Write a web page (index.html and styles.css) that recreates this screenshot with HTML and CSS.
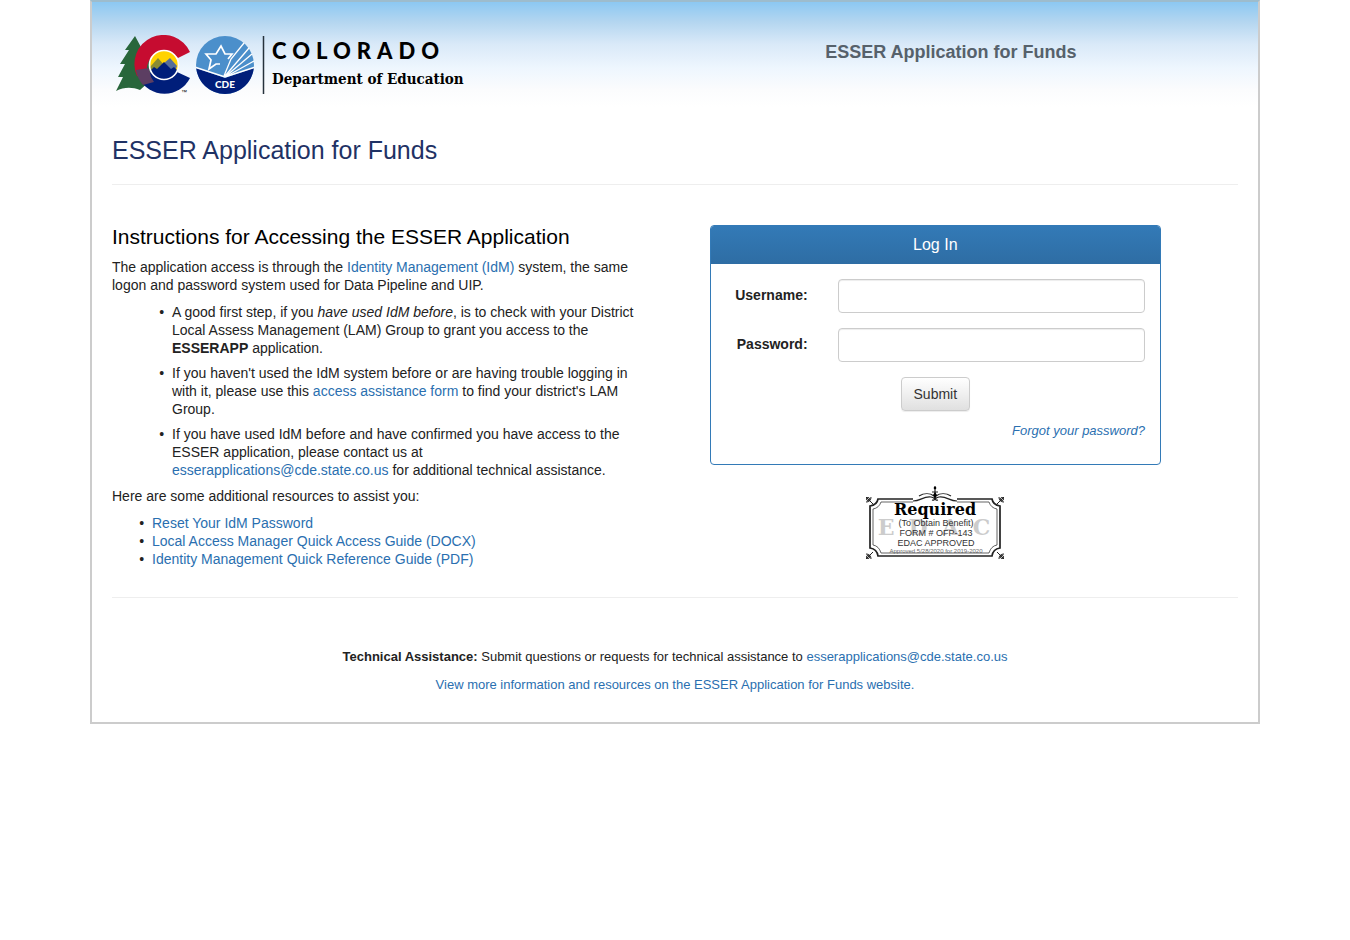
FILE: index.html
```html
<!DOCTYPE html>
<html lang="en">
<head>
<meta charset="utf-8">
<title>ESSER Application for Funds</title>
<link rel="stylesheet" href="styles.css">
</head>
<body>
<div class="page">
  <header class="site-header">
    <svg class="logo" viewBox="0 0 360 60" role="img" aria-label="Colorado Department of Education">
      <path fill="#28663b" d="M23 1 13 15h4L8 29h5L6 42h5L4 56c8-4 16-4 24-1l11-10V20l-8 1-4-7h3z"/>
      <path fill="#c60c30" d="M78 17A28.500 28.500 0 0 0 25 41L39 46A17 17 0 0 1 66 23z"/>
      <path fill="#001e7a" d="M27 43A28.500 28.500 0 0 0 78 43L65 37 40 37z"/>
      <path fill="#5c3e62" d="M24 35l13-2 2 9 3 5-11 3a29 29 0 0 1-7-15z"/>
      <circle cx="52" cy="30" r="14.500" fill="#ffd200"/>
      <path fill="#8a8b32" d="M38 32l8-9 7 8-8 9-6-3z"/>
      <path fill="#586f98" d="M51 29l7-6 7 8-4 9-9-6z"/>
      <path fill="#001e7a" d="M38 36l4-4 3 2 7-7 7 7 3-2 4 4a14.500 14.500 0 0 1-28 0z"/>
      <circle cx="52" cy="30" r="14.500" fill="none" stroke="#fff" stroke-width="1.700"/>
      <text class="logo-tm" x="69" y="59">™</text>
      <circle cx="113" cy="30" r="29" fill="#4b8fcb"/>
      <path fill="#001e7a" d="M84.160 33 113 43 141.840 33A29 29 0 0 1 84.160 33z"/>
      <path fill="none" stroke="#fff" stroke-width="1.500" d="M84 32.500 113 42 142 32.500"/>
      <path fill="none" stroke="#fff" stroke-width="1.300" d="M112 41 119 24 132 8M113 41 137 13M114 41 140 19M115 41 142 26"/>
      <path fill="none" stroke="#fff" stroke-width="1.700" d="M108 29 104 29 97 34 99 25 94 19H104L109 11 113 19H120L116 24"/>
      <text class="logo-badge" x="113" y="53">CDE</text>
      <path stroke="#26323c" stroke-width="1.500" d="M151.500 1v58"/>
      <text class="logo-name" x="160" y="24">COLORADO</text>
      <text class="logo-dept" x="160" y="49">Department of Education</text>
    </svg>
    <div class="site-title">ESSER Application for Funds</div>
  </header>

  <h1 class="page-title">ESSER Application for Funds</h1>

  <main class="content">
    <section class="instructions">
      <h2>Instructions for Accessing the ESSER Application</h2>
      <p>The application access is through the <a href="#">Identity Management (IdM)</a> system, the same logon and password system used for Data Pipeline and UIP.</p>
      <ul class="steps">
        <li>A good first step, if you <em>have used IdM before</em>, is to check with your District Local Assess Management (LAM) Group to grant you access to the <strong>ESSERAPP</strong> application.</li>
        <li>If you haven't used the IdM system before or are having trouble logging in with it, please use this <a href="#">access assistance form</a> to find your district's LAM Group.</li>
        <li>If you have used IdM before and have confirmed you have access to the ESSER application, please contact us at <a href="#">esserapplications@cde.state.co.us</a> for additional technical assistance.</li>
      </ul>
      <p>Here are some additional resources to assist you:</p>
      <ul class="resources">
        <li><a href="#">Reset Your IdM Password</a></li>
        <li><a href="#">Local Access Manager Quick Access Guide (DOCX)</a></li>
        <li><a href="#">Identity Management Quick Reference Guide (PDF)</a></li>
      </ul>
    </section>

    <section class="access">
      <form class="panel">
        <h2 class="panel-heading">Log In</h2>
        <div class="panel-body">
          <div class="field">
            <label for="username">Username:</label>
            <input id="username" type="text">
          </div>
          <div class="field">
            <label for="password">Password:</label>
            <input id="password" type="password">
          </div>
          <button class="submit" type="submit">Submit</button>
          <a class="forgot" href="#">Forgot your password?</a>
        </div>
      </form>
      <svg class="seal" viewBox="0 0 140 76" role="img" aria-label="Required to obtain benefit, EDAC approved">
        <text class="seal-mark" x="76" y="50">EDAC</text>
        <g fill="none" stroke="#222">
          <path stroke-width="1.700" d="M48 14H13q-1 6-8 7v42q7 1 8 8h114q1-7 8-8V21q-7-1-8-7H92"/>
          <path stroke-width=".7" d="M48 17H16q-2 6-8 7v36q6 1 8 8h108q2-7 8-8V24q-6-1-8-7H92"/>
          <path d="M1 74l7-7M139 74l-7-7M1 12l7 7M139 12l-7 7M1 17q5 0 5-5M139 17q-5 0-5-5M1 69q5 0 5 5M139 69q-5 0-5 5"/>
          <circle cx="3" cy="14" r="1.500"/><circle cx="137" cy="14" r="1.500"/><circle cx="3" cy="72" r="1.500"/><circle cx="137" cy="72" r="1.500"/>
          <path stroke-width="1.200" d="M48 16c8 0 10-5 18-4 5 1 4 4 1 3M92 16c-8 0-10-5-18-4-5 1-4 4-1 3M54 11c5-3 11-3 15 0M86 11c-5-3-11-3-15 0M70 1v14M67 7h6"/>
        </g>
        <circle cx="70" cy="3" r="1.300"/><path d="M68 10l2-3 2 3-2 4z"/>
        <text class="seal-title" x="70" y="30">Required</text>
        <text class="seal-line" x="71" y="41">(To Obtain Benefit)</text>
        <text class="seal-line" x="71" y="51">FORM # OFP-143</text>
        <text class="seal-line" x="71" y="61">EDAC APPROVED</text>
        <text class="seal-small" x="71" y="68">Approved 5/28/2020 for 2019-2020</text>
      </svg>
    </section>
  </main>

  <footer class="site-footer">
    <p><strong>Technical Assistance:</strong> Submit questions or requests for technical assistance to <a href="#">esserapplications@cde.state.co.us</a></p>
    <p><a href="#">View more information and resources on the ESSER Application for Funds website.</a></p>
  </footer>
</div>
</body>
</html>
```

FILE: styles.css
```css
* { box-sizing: border-box; }

body {
  margin: 0;
  background: #fff;
  color: #222;
  font: 14px/18px "Liberation Sans", Arial, sans-serif;
}

h1, h2, p, ul { margin: 0; }

ul { list-style-type: "•\00a0\00a0"; }

a { color: #2a6fb0; text-decoration: none; }
a:hover { text-decoration: underline; }

.page {
  max-width: 1170px;
  margin: 0 auto;
  padding: 0 20px;
  border: 2px solid #ccc;
  border-top-color: #9dbccd;
  background: linear-gradient(#8cc8f2 0, #b4d6f0 20px, #d9e9f8 42px, #eef6fe 66px, #fbfcfd 88px, #fff 105px) no-repeat;
}

.site-header {
  display: grid;
  grid-template-columns: 49% 51%;
  padding-top: 33px;
}

.logo { width: 360px; height: 60px; max-width: 100%; }
.logo-name { font: 900 22px Lato, sans-serif; letter-spacing: 6px; }
.logo-dept { font: bold 15px "DejaVu Serif Condensed", "DejaVu Serif", serif; }
.logo-badge { font: 900 10px Lato, sans-serif; fill: #fff; text-anchor: middle; }
.logo-tm { font: 6px "Liberation Sans", sans-serif; }

.site-title {
  padding-top: 5px;
  color: #56616b;
  font-size: 18px;
  font-weight: bold;
  line-height: 24px;
  text-align: center;
}

.page-title {
  margin-top: 41px;
  padding-bottom: 20px;
  border-bottom: 1px solid #eee;
  color: #1f3265;
  font-size: 25px;
  font-weight: normal;
  line-height: 28px;
}

.content {
  display: grid;
  grid-template-columns: 6fr 5fr;
  column-gap: 56px;
  padding: 40px 77px 29px 0;
}

.instructions h2 {
  margin-bottom: 9px;
  color: #000;
  font-size: 21px;
  font-weight: normal;
  line-height: 24px;
}

.steps {
  display: grid;
  gap: 7px;
  margin: 9px 0 8px;
  padding: 0 16px 0 60px;
}

.resources { margin-top: 9px; padding-left: 40px; }

.panel {
  border: 1px solid #337ab7;
  border-radius: 4px;
  overflow: hidden;
}

.panel-heading {
  padding: 10px 15px;
  background: linear-gradient(#337ab7, #2e6da4);
  color: #fff;
  font-size: 16px;
  font-weight: normal;
  line-height: 18px;
  text-align: center;
}

.panel-body {
  display: flex;
  flex-direction: column;
  gap: 15px;
  padding: 15px 15px 24px;
}

.field {
  display: grid;
  grid-template-columns: 4fr 15fr;
  column-gap: 30px;
}

.field label { padding-top: 7px; font-weight: bold; text-align: right; }

.field input {
  width: 100%;
  height: 34px;
  padding: 6px 12px;
  border: 1px solid #ccc;
  border-radius: 4px;
  box-shadow: inset 0 1px 1px rgba(0, 0, 0, 0.075);
  font: inherit;
}

.submit {
  align-self: center;
  height: 34px;
  padding: 6px 12px;
  border: 1px solid #ccc;
  border-radius: 4px;
  background: linear-gradient(#fff, #e0e0e0);
  box-shadow: 0 1px 1px rgba(0, 0, 0, 0.075);
  color: #333;
  font: inherit;
}

.forgot {
  align-self: flex-end;
  margin-top: -4px;
  font-size: 13px;
  font-style: italic;
}

.seal { display: block; width: 140px; height: 76px; margin: 20px auto 0; }
.seal text { text-anchor: middle; }
.seal-title { font: bold 16px "DejaVu Serif", serif; }
.seal-line { font: 9px "Liberation Sans", sans-serif; fill: #333; }
.seal-small { font: 6px "Liberation Sans", sans-serif; fill: #666; }
.seal-mark { font: bold 22px "DejaVu Serif", serif; fill: #ccc; letter-spacing: 14px; }

.site-footer {
  display: grid;
  gap: 10px;
  padding: 50px 0 28px;
  border-top: 1px solid #eee;
  font-size: 13px;
  text-align: center;
}
```
